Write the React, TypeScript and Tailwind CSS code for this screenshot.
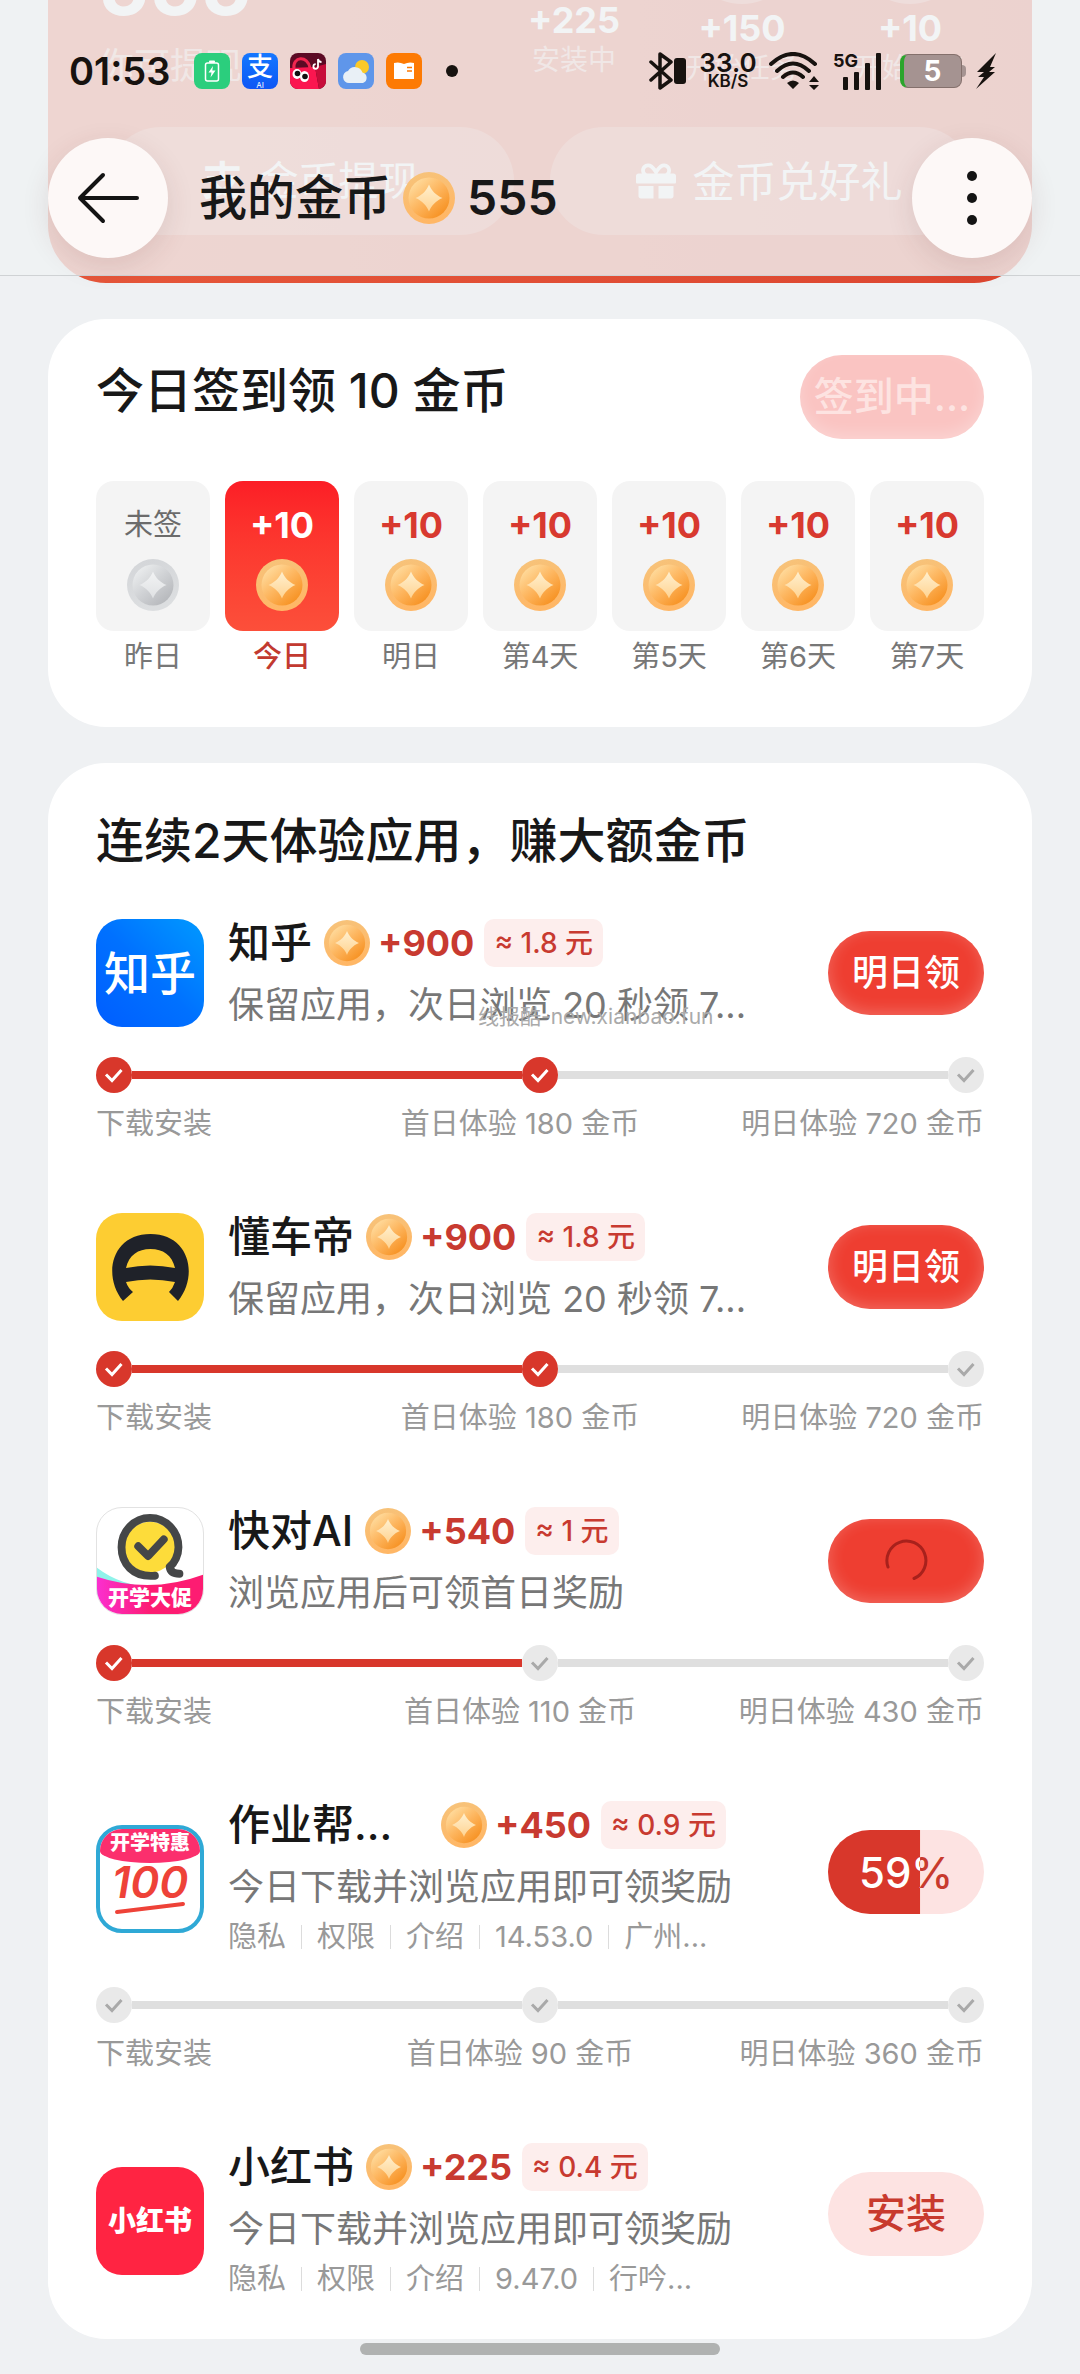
import React, { useId } from 'react';
import { FaGift } from 'react-icons/fa';

const checkInDays = [
  { id: 0, label: '昨日', reward: '未签', missed: true, today: false },
  { id: 1, label: '今日', reward: '+10', missed: false, today: true },
  { id: 2, label: '明日', reward: '+10', missed: false, today: false },
  { id: 3, label: '第4天', reward: '+10', missed: false, today: false },
  { id: 4, label: '第5天', reward: '+10', missed: false, today: false },
  { id: 5, label: '第6天', reward: '+10', missed: false, today: false },
  { id: 6, label: '第7天', reward: '+10', missed: false, today: false }
];

const bubbles = [
  { id: 0, coins: '+225', label: '安装中', top: 'pt-1' },
  { id: 1, coins: '+150', label: '开始任务', top: 'pt-3' },
  { id: 2, coins: '+10', label: '开始任务', top: 'pt-3' }
];

type Task = {
  id: string;
  name: string;
  coins: string;
  cash: string;
  desc: string;
  meta?: string[];
  action: 'claim' | 'loading' | 'progress' | 'install';
  percent?: number;
  done: number;
  steps?: string[];
};

const tasks: Task[] = [
  {
    id: 'zhihu',
    name: '知乎',
    coins: '+900',
    cash: '≈ 1.8 元',
    desc: '保留应用，次日浏览 20 秒领 7...',
    action: 'claim',
    done: 2,
    steps: ['下载安装', '首日体验 180 金币', '明日体验 720 金币']
  },
  {
    id: 'dongchedi',
    name: '懂车帝',
    coins: '+900',
    cash: '≈ 1.8 元',
    desc: '保留应用，次日浏览 20 秒领 7...',
    action: 'claim',
    done: 2,
    steps: ['下载安装', '首日体验 180 金币', '明日体验 720 金币']
  },
  {
    id: 'kuaidui',
    name: '快对AI',
    coins: '+540',
    cash: '≈ 1 元',
    desc: '浏览应用后可领首日奖励',
    action: 'loading',
    done: 1,
    steps: ['下载安装', '首日体验 110 金币', '明日体验 430 金币']
  },
  {
    id: 'zuoyebang',
    name: '作业帮...',
    coins: '+450',
    cash: '≈ 0.9 元',
    desc: '今日下载并浏览应用即可领奖励',
    meta: ['隐私', '权限', '介绍', '14.53.0', '广州...'],
    action: 'progress',
    percent: 59,
    done: 0,
    steps: ['下载安装', '首日体验 90 金币', '明日体验 360 金币']
  },
  {
    id: 'xiaohongshu',
    name: '小红书',
    coins: '+225',
    cash: '≈ 0.4 元',
    desc: '今日下载并浏览应用即可领奖励',
    meta: ['隐私', '权限', '介绍', '9.47.0', '行吟...'],
    action: 'install',
    done: 0
  }
];

const Coin = ({ className, gray = false }: { className: string; gray?: boolean }) => {
  const id = useId();
  return (
    <svg viewBox="0 0 52 52" className={className} aria-hidden="true">
      <defs>
        <linearGradient id={`${id}rim`} x1="0" y1="0" x2="0.3" y2="1">
          <stop offset="0" stopColor={gray ? '#d3d5d8' : '#f6c47c'} />
          <stop offset="1" stopColor={gray ? '#dcdee0' : '#ffb766'} />
        </linearGradient>
        <linearGradient id={`${id}face`} x1="0.1" y1="0.1" x2="0.85" y2="0.95">
          <stop offset="0" stopColor={gray ? '#eceeef' : '#ffdda0'} />
          <stop offset="0.5" stopColor={gray ? '#cfd1d4' : '#fdb45c'} />
          <stop offset="1" stopColor={gray ? '#b4b6ba' : '#f68f1e'} />
        </linearGradient>
        <linearGradient id={`${id}star`} x1="0" y1="0" x2="0" y2="1">
          <stop offset="0" stopColor={gray ? '#f2f3f4' : '#fff0cf'} />
          <stop offset="1" stopColor={gray ? '#dfe1e3' : '#ffd391'} />
        </linearGradient>
      </defs>
      <circle cx="26" cy="26" r="26" fill={`url(#${id}rim)`} />
      <circle cx="26" cy="26" r="20.5" fill={`url(#${id}face)`} />
      <path
        d="M26 12.500C28 18 33 23.500 39.500 26C33 28.500 28 34 26 39.500C24 34 19 28.500 12.500 26C19 23.500 24 18 26 12.500Z"
        fill={`url(#${id}star)`}
      />
    </svg>
  );
};

const StatusBar = () => {
  return (
    <div className="flex h-9 items-center justify-between pr-[82px] pl-[69px] text-[#17120f]">
      <div className="flex items-center">
        <span className="w-[125px] text-[38px] leading-9 font-semibold">01:53</span>
        <div className="flex items-center gap-3">
          <svg viewBox="0 0 36 36" className="size-9">
            <rect width="36" height="36" rx="8" fill="#2bce7d" />
            <rect x="11.500" y="10" width="13" height="18" rx="2" fill="none" stroke="#fff" strokeWidth="1.500" />
            <rect x="15" y="7.500" width="6" height="2.500" rx="1" fill="#fff" />
            <path d="M19 13l-4.500 6.500h3l-1 5 5-7h-3.200z" fill="#fff" />
          </svg>
          <span className="flex size-9 flex-col items-center overflow-hidden rounded-lg bg-linear-to-b from-[#1677ff] to-[#0f56f5] text-white">
            <span className="text-[26px] leading-[28px] font-medium">支</span>
            <span className="text-[8px] leading-[8px]">AI</span>
          </span>
          <svg viewBox="0 0 36 36" className="size-9">
            <rect width="36" height="36" rx="8" fill="#5c0a24" />
            <path d="M0 15l25-1 4 22H8a8 8 0 0 1-8-8z" fill="#fb1650" />
            <path d="M25 14l11-3v17a8 8 0 0 1-7 8z" fill="#c70d3a" />
            <path d="M4 16C2 3 18 2 20 15" fill="none" stroke="#f0264f" strokeWidth="3" />
            <ellipse cx="7" cy="21" rx="4.500" ry="5" fill="#fff" />
            <ellipse cx="14.500" cy="23.500" rx="4.500" ry="5.500" fill="#fff" />
            <circle cx="7.500" cy="20.500" r="2.800" fill="#111" />
            <circle cx="15" cy="23.500" r="2.800" fill="#111" />
            <path d="M28 6v7.500a2.300 2.300 0 1 1-2.300-2.300M28 6c.4 2 1.700 3 3.500 3" fill="none" stroke="#fff" strokeWidth="1.800" />
          </svg>
          <svg viewBox="0 0 36 36" className="size-9">
            <rect width="36" height="36" rx="8" fill="#5f96ea" />
            <circle cx="24" cy="14" r="7" fill="#fcc928" />
            <path d="M11 30a6 6 0 0 1-1-11.900 8 8 0 0 1 14.500 1.400A5.500 5.500 0 0 1 25 30z" fill="#e9f0f6" />
          </svg>
          <svg viewBox="0 0 36 36" className="size-9">
            <rect width="36" height="36" rx="8" fill="#fd7a03" />
            <path d="M8 10q5-1.500 10 1 5-2.500 10-1v16H8z" fill="#fff" />
            <path d="M21 14.500h5M21 18h5" stroke="#fd7a03" strokeWidth="1.300" />
          </svg>
        </div>
        <span className="ml-6 size-3 rounded-full bg-[#17120f]" />
      </div>

      <div className="flex items-center">
        <svg viewBox="0 0 38 38" className="h-[38px] w-[38px]">
          <path d="M2 10l20 18-11 8V2l11 8L2 28" fill="none" stroke="currentColor" strokeWidth="3.500" strokeLinejoin="round" strokeLinecap="round" />
          <rect x="25" y="6" width="12" height="26" rx="3" fill="currentColor" />
        </svg>
        <div className="mr-3 ml-3 flex w-[58px] flex-col items-center font-semibold">
          <span className="text-[26px] leading-[21px]">33.0</span>
          <span className="text-[17px] leading-[17px]">KB/S</span>
        </div>
        <svg viewBox="0 0 50 38" className="h-[38px] w-[50px]">
          <path d="M2 12Q24-8 46 12M8 19Q24 4 40 19M14 25Q24 16 34 25" fill="none" stroke="currentColor" strokeWidth="4" strokeLinecap="round" />
          <path d="M24 37l-6-6q6-5 12 0zM45 24l5 6H40zM45 38l5-5H40z" fill="currentColor" />
        </svg>
        <div className="ml-3.5 flex items-start">
          <span className="text-[18px] leading-[18px] font-bold">5G</span>
          <svg viewBox="0 0 42 38" className="-ml-4 h-[38px] w-[42px]">
            <rect x="1" y="25" width="5" height="13" rx="1" fill="currentColor" />
            <rect x="12" y="20" width="5" height="18" rx="1" fill="currentColor" />
            <rect x="23" y="11" width="5" height="27" rx="1" fill="currentColor" />
            <rect x="34" y="1" width="5" height="37" rx="1" fill="currentColor" />
          </svg>
        </div>
        <div className="ml-4 flex items-center">
          <span className="flex h-[34px] w-[62px] items-center justify-center overflow-hidden rounded-lg border border-l-4 border-[#84706c] border-l-[#2ba52c] bg-[#a59391] text-[28px] font-bold text-white">
            5
          </span>
          <span className="h-3 w-1 rounded-r bg-[#a59391]" />
        </div>
        <svg viewBox="0 0 22 38" className="ml-2.5 h-[38px] w-[22px]">
          <path d="M20 1L1 20h7l-6 5h6L0 37l19-17h-6l6-5h-5z" fill="currentColor" />
        </svg>
      </div>
    </div>
  );
};

const Header = () => {
  return (
    <header className="absolute inset-x-0 top-0 z-10 h-[276px] border-b border-[#cfd2d4] bg-[#eff1f3]/82 pt-[53px]">
      <StatusBar />
      <div className="mt-[49px] flex items-center px-12">
        <button aria-label="返回" className="flex size-[120px] items-center justify-center rounded-full bg-[#fdf8f7] shadow-[0_8px_28px_rgba(90,40,40,0.12)]">
          <svg viewBox="0 0 64 54" className="h-[54px] w-[64px]">
            <path d="M61 27H4M27 4L4 27l23 23" fill="none" stroke="#141414" strokeWidth="4" strokeLinecap="round" strokeLinejoin="round" />
          </svg>
        </button>
        <h1 className="ml-[31px] text-[48px] leading-[56px] font-medium">我的金币</h1>
        <Coin className="ml-3 size-[52px]" />
        <span className="ml-3 text-[48px] leading-[56px] font-semibold">555</span>
        <button aria-label="更多" className="ml-auto flex size-[120px] flex-col items-center justify-center gap-3 rounded-full bg-[#fdf8f7] shadow-[0_8px_28px_rgba(90,40,40,0.12)]">
          <span className="size-2.5 rounded-full bg-[#141414]" />
          <span className="size-2.5 rounded-full bg-[#141414]" />
          <span className="size-2.5 rounded-full bg-[#141414]" />
        </button>
      </div>
    </header>
  );
};

// 顶部红色卡片，已滚动到标题栏下方
const Hero = () => {
  return (
    <section className="mx-12 -mt-[120px] overflow-hidden rounded-[58px] bg-linear-to-r from-[#e6573a] to-[#dc4630] pb-12 text-white">
      <div className="flex h-[247px] justify-between pr-[38px] pl-[50px]">
        <div className="pt-[66px]">
          <p className="text-[80px] leading-[80px] font-bold">555</p>
          <p className="mt-5 text-[36px] leading-[40px] text-white/60">你可提现</p>
        </div>
        <ul className="flex">
          {bubbles.map((item) => (
            <li key={item.id} className={`flex w-[168px] flex-col items-center ${item.top}`}>
              <span className="size-28 rounded-full bg-white/30" />
              <span className="mt-1 text-[36px] leading-[40px] font-bold">{item.coins}</span>
              <span className="text-[28px] leading-[40px] text-white/60">{item.label}</span>
            </li>
          ))}
        </ul>
      </div>
      <div className="flex gap-9 px-[59px]">
        <button className="flex h-[108px] flex-1 items-center justify-center gap-4 rounded-full bg-white/25 text-[40px]">
          <span className="font-bold">支</span>
          金币提现
        </button>
        <button className="flex h-[108px] flex-1 items-center justify-center gap-4 rounded-full bg-white/25 pl-4 text-[42px]">
          <FaGift size={40} />
          金币兑好礼
        </button>
      </div>
    </section>
  );
};

const CheckIn = () => {
  return (
    <section className="mx-12 mt-9 rounded-[58px] bg-white px-12 pt-9 pb-12">
      <div className="flex items-start justify-between">
        <h2 className="pt-2 text-[48px] leading-[56px] font-medium">今日签到领 10 金币</h2>
        <button className="h-[84px] w-[184px] rounded-full bg-[#fac4c2] text-[40px] font-medium whitespace-nowrap text-[#fde3e1] shadow-[inset_0_-6px_14px_rgba(255,255,255,0.25)]">
          签到中...
        </button>
      </div>
      <ul className="mt-[42px] grid grid-cols-7 gap-[15px]">
        {checkInDays.map((day) => (
          <li key={day.id} className="flex flex-col items-center">
            <div
              className={`flex h-[150px] w-full flex-col items-center rounded-[18px] pt-6 ${
                day.today ? 'bg-linear-to-b from-[#fc1d26] to-[#fc4f3a]' : 'bg-[#f4f4f4]'
              }`}
            >
              {day.missed ? (
                <span className="text-[29px] leading-[40px] text-[#6b6b6b]">{day.reward}</span>
              ) : (
                <span className={`text-[36px] leading-[40px] font-bold ${day.today ? 'text-white' : 'text-[#d8392f]'}`}>
                  {day.reward}
                </span>
              )}
              <Coin className="mt-3.5 size-[52px]" gray={day.missed} />
            </div>
            <span className={`mt-1 text-[29px] leading-[44px] ${day.today ? 'font-medium text-[#c23a30]' : 'text-[#777]'}`}>
              {day.label}
            </span>
          </li>
        ))}
      </ul>
    </section>
  );
};

const AppIcon = ({ id }: { id: string }) => {
  if (id === 'zhihu') {
    return (
      <div className="flex size-[108px] shrink-0 items-center justify-center rounded-[26px] bg-linear-to-tr from-[#005dff] via-[#0071ff] to-[#0099ff] text-[46px] font-medium text-white">
        知乎
      </div>
    );
  }
  if (id === 'dongchedi') {
    return (
      <svg viewBox="0 0 108 108" className="size-[108px] shrink-0">
        <rect width="108" height="108" rx="26" fill="#fdcd32" />
        <path
          d="M27 88C6 62 16 21 54.500 21C93 21 103 62 82 88L73 79Q77 75 79 69Q54 64 30 69Q32 75 37 79ZM30 55Q54 50 79 55C76 42 67 36 54.500 36C42 36 33 42 30 55Z"
          fill="#1f2229"
        />
      </svg>
    );
  }
  if (id === 'kuaidui') {
    return (
      <div className="relative size-[108px] shrink-0 overflow-hidden rounded-[26px] border border-[#e2e2e2] bg-white">
        <svg viewBox="0 0 108 108" className="size-full">
          <defs>
            <linearGradient id="kuaidui-wave">
              <stop offset="0" stopColor="#fb2fd0" />
              <stop offset="0.5" stopColor="#fd1c72" />
            </linearGradient>
          </defs>
          <path d="M0 61Q30 84 72 80V90H0z" fill="#8ff3ea" />
          <path d="M0 70Q54 88 108 68V108H0z" fill="url(#kuaidui-wave)" />
          <circle cx="54" cy="40" r="26" fill="#fddc3a" />
          <path d="M59 69C36 71 25 56 25 40A29 30 0 0 1 83 40C83 48 79 56 74 60Q75 67 84 67" fill="none" stroke="#454748" strokeWidth="8" strokeLinecap="round" strokeLinejoin="round" />
          <path d="M42 39l10 10 16-17" fill="none" stroke="#454748" strokeWidth="8" strokeLinecap="round" strokeLinejoin="round" />
        </svg>
        <span className="absolute inset-x-0 bottom-1 text-center text-[21px] leading-[24px] font-black text-white">开学大促</span>
      </div>
    );
  }
  if (id === 'zuoyebang') {
    return (
      <div className="flex size-[108px] shrink-0 flex-col items-center overflow-hidden rounded-[26px] border-4 border-[#2fa9d6] bg-white">
        <span className="h-[34px] w-full bg-[#fb2f6d] text-center text-[20px] leading-[28px] font-black whitespace-nowrap text-white [border-radius:0_0_50%_50%/0_0_12px_12px]">
          开学特惠
        </span>
        <span className="text-[44px] leading-[38px] font-semibold text-[#ee4238] italic">100</span>
        <svg viewBox="0 0 72 14" className="h-3.5 w-[72px]">
          <path d="M3 11L69 3" stroke="#ee4238" strokeWidth="4" strokeLinecap="round" />
        </svg>
      </div>
    );
  }
  return (
    <div className="flex size-[108px] shrink-0 items-center justify-center rounded-[26px] bg-[#ff2442] text-[28px] font-black text-white">
      小红书
    </div>
  );
};

const ActionButton = ({ task }: { task: Task }) => {
  if (task.action === 'install') {
    return <button className="h-[84px] w-[156px] rounded-full bg-[#fde3e2] text-[40px] font-medium text-[#c83a2e]">安装</button>;
  }
  if (task.action === 'progress') {
    return (
      <button className="relative h-[84px] w-[156px] overflow-hidden rounded-full bg-[#fde3e2] text-[42px] font-medium text-[#c83a2e]">
        {task.percent}%
        <span
          aria-hidden="true"
          className="absolute inset-0 flex items-center justify-center bg-[#d8372b] text-white"
          style={{ clipPath: `inset(0 ${100 - (task.percent ?? 0)}% 0 0)` }}
        >
          {task.percent}%
        </span>
      </button>
    );
  }
  return (
    <button
      aria-label={task.action === 'loading' ? '加载中' : undefined}
      className="flex h-[84px] w-[156px] items-center justify-center rounded-full bg-[#ee3e31] text-[36px] font-medium text-white shadow-[inset_0_-3px_16px_rgba(255,255,255,0.24)]"
    >
      {task.action === 'claim' ? (
        '明日领'
      ) : (
        <svg viewBox="0 0 44 44" className="size-[44px]">
          <path d="M4 28A19.500 19.500 0 1 1 30 39.500" fill="none" stroke="#a8211c" strokeWidth="3" strokeLinecap="round" />
        </svg>
      )}
    </button>
  );
};

const StepDot = ({ done }: { done: boolean }) => {
  return (
    <svg viewBox="0 0 36 36" className="size-9 shrink-0">
      <circle cx="18" cy="18" r="18" fill={done ? '#d8372b' : '#e9e9e9'} />
      <path d="M10 17.500l6 6 9.500-10.500" fill="none" stroke={done ? '#fff' : '#a9a9a9'} strokeWidth="3" />
    </svg>
  );
};

const Steps = ({ steps, done }: { steps: string[]; done: number }) => {
  return (
    <div className="mt-[30px]">
      <div className="flex items-center">
        <StepDot done={done > 0} />
        <span className={`h-2 flex-1 ${done > 0 ? 'bg-[#d8372b]' : 'bg-[#dfdfdf]'}`} />
        <StepDot done={done > 1} />
        <span className={`h-2 flex-1 ${done > 2 ? 'bg-[#d8372b]' : 'bg-[#dfdfdf]'}`} />
        <StepDot done={done > 2} />
      </div>
      <div className="mt-2.5 grid grid-cols-[210px_1fr_250px] text-[29px] leading-[42px] whitespace-nowrap text-[#999]">
        <span>{steps[0]}</span>
        <span className="text-center">{steps[1]}</span>
        <span className="text-right">{steps[2]}</span>
      </div>
    </div>
  );
};

const TaskItem = ({ task }: { task: Task }) => {
  return (
    <li>
      <div className="flex items-center">
        <AppIcon id={task.id} />
        <div className="relative ml-6 min-w-0 flex-1">
          <div className="flex h-12 items-center">
            <h3 className={`text-[42px] leading-[48px] font-medium ${task.id === 'zuoyebang' ? 'w-[201px]' : ''}`}>{task.name}</h3>
            <Coin className="ml-3 size-[46px]" />
            <span className="ml-2 text-[36px] font-bold text-[#c83a30]">{task.coins}</span>
            <span className="ml-2.5 flex h-12 items-center rounded-[10px] bg-[#fdeeed] px-2.5 text-[28px] font-medium text-[#c83a30]">
              {task.cash}
            </span>
          </div>
          <p className="mt-4 text-[36px] leading-[44px] whitespace-nowrap text-[#777]">{task.desc}</p>
          {task.id === 'zhihu' && (
            <span className="absolute bottom-0 left-[250px] text-[21px] leading-5 text-[#aaa]">线报酷-new.xianbao.fun</span>
          )}
          {task.meta && (
            <div className="mt-2 flex h-10 items-center text-[29px] whitespace-nowrap text-[#999]">
              {task.meta.map((text, index) => (
                <React.Fragment key={text}>
                  {index > 0 && <span className="mx-[15px] h-6 w-px bg-[#dcdcdc]" />}
                  {index < 3 ? <a href="#">{text}</a> : <span>{text}</span>}
                </React.Fragment>
              ))}
            </div>
          )}
        </div>
        <div className={task.meta ? 'pb-3.5' : ''}>
          <ActionButton task={task} />
        </div>
      </div>
      {task.steps && <Steps steps={task.steps} done={task.done} />}
    </li>
  );
};

export default function App() {
  return (
    <div className="relative overflow-hidden bg-[#eff1f3] font-['Inter','Noto_Sans_CJK_SC',sans-serif] text-[#181818]">
      <Header />
      <Hero />
      <CheckIn />
      <section className="mx-12 mt-9 rounded-[58px] bg-white px-12 pt-[50px] pb-10">
        <h2 className="text-[48px] leading-[56px] font-medium">连续2天体验应用，赚大额金币</h2>
        <ul className="mt-[50px] flex flex-col gap-[68px]">
          {tasks.map((task) => (
            <TaskItem key={task.id} task={task} />
          ))}
        </ul>
      </section>
      <div className="mx-auto mt-1 mb-[19px] h-3 w-1/3 rounded-full bg-[#b0b2b1]" />
    </div>
  );
}
